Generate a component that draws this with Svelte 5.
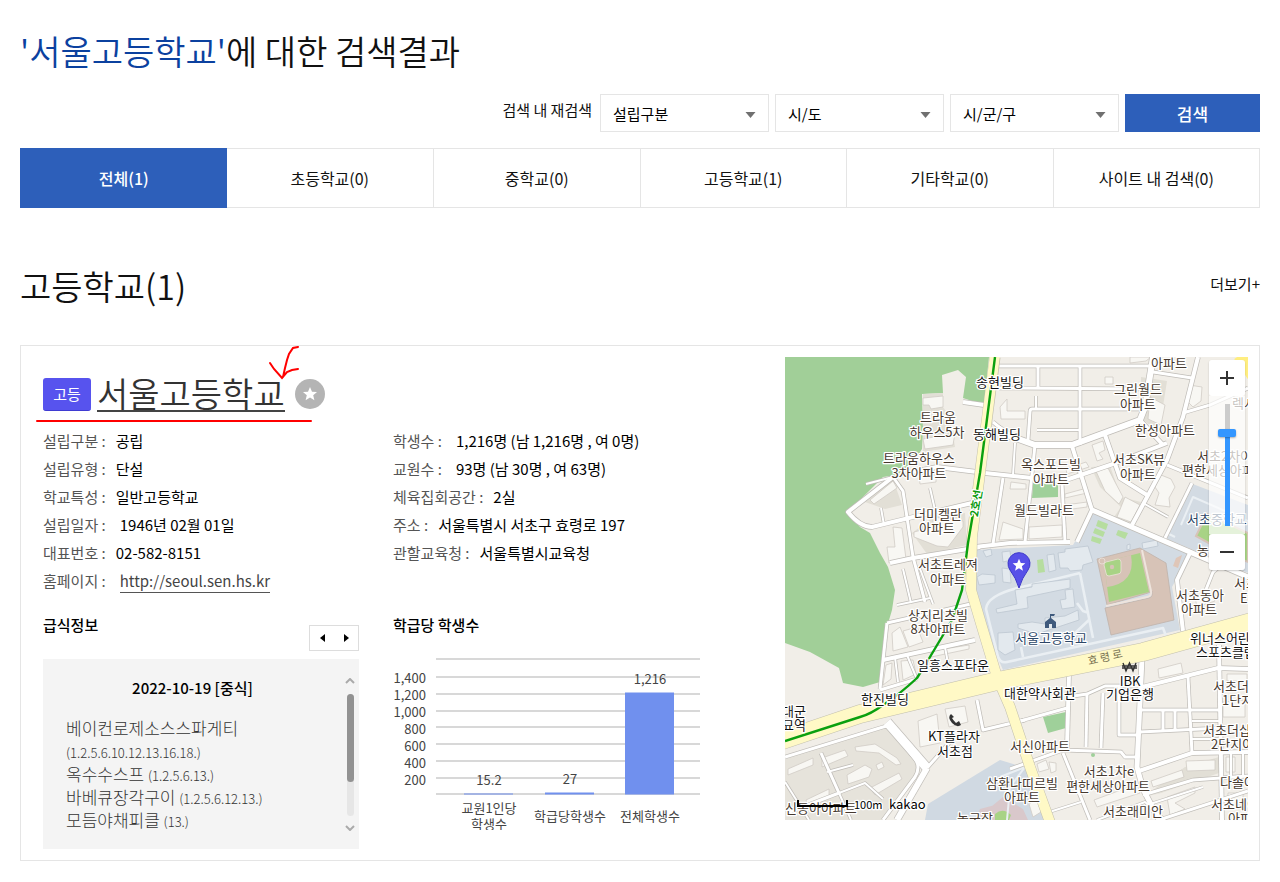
<script>
  const filters = ['설립구분', '시/도', '시/군/구'];
  const tabs = ['전체(1)', '초등학교(0)', '중학교(0)', '고등학교(1)', '기타학교(0)', '사이트 내 검색(0)'];

  const basics = [
    { label: '설립구분', value: '공립' },
    { label: '설립유형', value: '단설' },
    { label: '학교특성', value: '일반고등학교' },
    { label: '설립일자', value: '1946년 02월 01일', wide: true },
    { label: '대표번호', value: '02-582-8151' },
    { label: '홈페이지', value: 'http://seoul.sen.hs.kr', link: true, wide: true }
  ];
  const details = [
    { label: '학생수', value: '1,216명 (남 1,216명 , 여 0명)', wide: true },
    { label: '교원수', value: '93명 (남 30명 , 여 63명)', wide: true },
    { label: '체육집회공간', value: '2실' },
    { label: '주소', value: '서울특별시 서초구 효령로 197' },
    { label: '관할교육청', value: '서울특별시교육청' }
  ];

  const meals = [
    { name: '베이컨로제소스스파게티', codes: '(1.2.5.6.10.12.13.16.18.)' },
    { name: '옥수수스프', codes: '(1.2.5.6.13.)' },
    { name: '바베큐장각구이', codes: '(1.2.5.6.12.13.)' },
    { name: '모듬야채피클', codes: '(13.)' }
  ];

  const ticks = ['1,400', '1,200', '1,000', '800', '600', '400', '200'];
  const bars = [
    { value: '15.2', x: 71, h: 1, labelY: 135, name: ['교원1인당', '학생수'] },
    { value: '27', x: 152, h: 2, labelY: 134, name: ['학급당학생수'] },
    { value: '1,216', x: 232, h: 102, labelY: 34, name: ['전체학생수'] }
  ];

  // Minor streets: stroke width and path
  const streets = [
    [3, 'M213 9H366'], [3, 'M295 9V88'], [3, 'M253 9V31'], [3, 'M214 31L360 32'],
    [3, 'M355 52H247Q245 52 245 55L243 83'], [2, 'M252 73H294'], [2, 'M251 39V51'],
    [4, 'M378 88L355 63'], [4, 'M413 0L398 60L382 103L347 168'], [3, 'M368 15L407 21'],
    [3, 'M398 56L425 48L463 31'], [4, 'M287 89L297 121L307 153L292 185'],
    [5, 'M307 153L463 220'], [4, 'M128 115L152 110L200 116L247 121L278 124L328 107L382 86'],
    [4, 'M320 78L335 121L362 138'], [3, 'M250 88L240 185'], [3, 'M277 126L280 185'],
    [4, 'M190 190L225 186L285 185'], [3, 'M382 108L463 141'], [2, 'M358 146L383 160'],
    [3, 'M407 126L380 181'], [2, 'M230 86L228 118'], [4, 'M108 120L63 155Q75 170 87 170L128 160L187 146'],
    [3, 'M108 120L118 134L128 200L140 245'], [2, 'M145 131L150 153'], [2, 'M96 151L99 168'],
    [4, 'M105 206L128 201L195 190'], [2, 'M81 127L108 120'], [4, 'M178 45L199 48'],
    [2, 'M118 212L126 246'], [2, 'M134 209L148 247'], [3, 'M208 65L225 79'],
    [3, 'M218 121L208 187'], [2, 'M112 248L145 241'], [3, 'M102 266L142 257L190 246'],
    [3, 'M102 266L95 332'], [4, 'M98 303L190 283'], [3, 'M95 333L132 322'],
    [2, 'M122 298L131 320'], [2, 'M110 300L113 325'], [2, 'M160 290L164 312'],
    [9, 'M102 365L142 411'], [3, 'M142 411L164 386'], [6, 'M142 411L112 463'],
    [3, 'M192 343L198 373L240 363'], [3, 'M0 400L98 370Q104 368 107 372L130 402Q136 410 130 420L98 463'],
    [3, 'M36 396L54 436L2 456'], [2, 'M54 436L66 463'], [2, 'M42 415L68 408'],
    [2, 'M54 436L80 426L98 442'], [2, 'M0 425L24 463'], [3, 'M232 365L282 351'],
    [4, 'M284 316L282 391'], [3, 'M225 412L278 393L336 395L340 400H352'],
    [3, 'M302 336L301 390'], [3, 'M318 336L316 391'], [3, 'M282 340L302 337L320 329H354'],
    [3, 'M334 330V378H353'], [5, 'M357 301L352 410L358 432L374 463'],
    [4, 'M357 330L433 311L463 312'], [3, 'M403 320L407 396'], [3, 'M355 353H437'],
    [3, 'M355 375L436 371'], [4, 'M354 414L407 396L463 395'], [3, 'M358 438L408 423L463 419'],
    [4, 'M434 288L437 463'], [3, 'M278 396L305 463'], [2, 'M258 457L296 445'],
    [4, 'M405 196L392 223L398 274'], [3, 'M418 240L428 215L436 208'],
    [3, 'M378 353V374'], [3, 'M390 353V374'], [2, 'M407 364H435'], [2, 'M407 382H435'],
    [2, 'M446 396V419'], [2, 'M458 396V419'], [2, 'M312 463L360 445L380 463'],
    [2, 'M362 448L418 430'], [3, 'M374 463L463 434']
  ];

  // Building footprints
  const buildings = [
    'M138 41L158 39V50L146 52L144 48H138Z', 'M138 82L170 76L168 88L140 92Z', 'M85 143L108 124L112 131L89 147Z',
    'M129 175L148 170V160L178 164V170L163 190L152 189L129 180Z', 'M108 170L117 171L121 202L104 206L102 190H110Z',
    'M134 118H151V125L135 127Z', 'M215 50L222 42V54H240V62H216Z', 'M218 165L238 172V182L214 183Z',
    'M365 40L380 48L376 68L363 62Z', 'M404 28L417 30L416 44L408 50L403 45Z', 'M307 88L318 84L320 93L314 96L318 102L312 104Z',
    'M281 112L301 105L304 110L282 117Z', 'M280 137L302 131V136L280 141Z', 'M280 148L302 145V150L280 153Z',
    'M310 112L323 111L330 125L338 140L334 147L320 134Z', 'M340 140L355 148L346 165L332 160Z',
    'M376 118L386 122L390 130L384 141L385 150L370 148L374 136L370 130Z', 'M244 170L277 168V180L244 182Z',
    'M226 125L241 127V132L225 132Z', 'M320 20H328V27H320Z',
    'M107 276L115 270L123 290L108 294Z', 'M118 274L132 270L138 285L124 290Z', 'M146 294L184 288V292L146 300Z',
    'M101 308L107 306L106 322L98 328Z', 'M116 304L128 303L131 317L118 323Z', 'M133 364L152 357L155 386L135 390Z',
    'M160 352L180 349L183 365L164 370Z', 'M373 312L396 306L398 316L374 321Z', 'M3 412L28 401V408L3 418Z',
    'M37 401L60 393L63 399L37 410Z', 'M70 390L90 387L112 401L116 407L111 408L94 396L71 394Z',
    'M62 418L80 408L87 412L84 420L63 427Z', 'M85 431L114 416L117 422L90 438Z', 'M21 443L44 432V439L22 447Z',
    'M91 408L97 405L99 410L93 413Z', 'M252 407L261 403L264 412L254 415Z', 'M264 405L271 406V414L266 416Z',
    'M309 443L352 427L355 436L312 450Z', 'M366 424L397 413L399 420L368 430Z', 'M401 404L430 403V413L402 414Z',
    'M244 447L252 442L256 455L248 460Z', 'M382 440L410 430V436L390 446L400 452L385 458Z',
    'M438 345L460 343V360H438Z', 'M442 317H462V324H442Z', 'M441 400H450V415H441Z', 'M443 436H458V448H443Z',
    'M361 4L366 0H345V6Z', 'M410 240L425 236L430 244L412 250Z'
  ];

  const campus = [
    'M198 194L206 192L207 198L201 200Z', 'M217 195L225 194L226 203L218 205Z', 'M192 220L197 217L210 218V226L194 228Z',
    'M217 211L225 212L226 226L218 225Z', 'M262 198L269 197L271 213L264 215Z',
    'M273 196L280 195V192L303 189L308 205L298 208L297 213L285 214L283 211H275Z',
    'M230 233L247 230V227L285 222V231L242 240L243 251L212 256L211 252L232 247Z',
    'M280 233L288 232L290 250L277 252L275 243L281 242Z',
    'M233 267L247 265L260 267V261L280 259L293 253L294 263L255 276L245 275L233 271Z',
    'M213 276L228 275L230 293L220 298L213 293Z', 'M357 186L372 183L373 189L358 192Z', 'M342 188L345 187V192L342 193Z'
  ];

  // Map captions: text, x, y of the middle of the line, colour kind, anchor
  const captions = [
    ['아파트', 384, 6], ['그린월드', 353, 32], ['아파트', 353, 47], ['트라움', 153, 60], ['하우스5차', 152, 75],
    ['한성아파트', 380, 73], ['트라움하우스', 134, 101], ['3차아파트', 134, 116], ['옥스포드빌', 266, 107],
    ['아파트', 266, 122], ['서초SK뷰', 354, 102], ['아파트', 353, 117], ['서초2차이', 412, 99, '', 'start'],
    ['편한세상아파', 397, 113, '', 'start'], ['렉시', 447, 46, '', 'start'], ['더미켈란', 153, 157], ['아파트', 152, 171],
    ['월드빌라트', 259, 153], ['서초중학교', 402, 162, 'navy', 'start'], ['농', 418, 193, '', 'middle'],
    ['서초트레져', 163, 207], ['아파트', 163, 222], ['상지리츠빌', 153, 258], ['8차아파트', 153, 272],
    ['서초동아', 415, 238], ['아파트', 414, 252], ['서초', 449, 226, '', 'start'], ['E', 455, 241, '', 'start'],
    ['서신아파트', 255, 389], ['서초1차e', 324, 414], ['편한세상아파트', 323, 429], ['서초래미안', 348, 454],
    ['삼환나띠르빌', 237, 426], ['아파트', 237, 440], ['서초더샵', 428, 329, '', 'start'], ['1단지', 437, 343, '', 'start'],
    ['서초더샵', 418, 373, '', 'start'], ['2단지아파트', 426, 387, '', 'start'], ['다솔아파트', 435, 425, '', 'start'],
    ['서초네이처', 426, 447, '', 'start'], ['아파트', 443, 461, '', 'start'], ['신동아아파트', 0, 451, '', 'start'],
    ['농구장', 190, 461], ['송현빌딩', 215, 25, 'dark'], ['동해빌딩', 212, 77, 'dark'],
    ['일흥스포타운', 168, 308, 'dark'], ['한진빌딩', 100, 342, 'dark'], ['대한약사회관', 255, 336, 'dark'],
    ['IBK', 345, 324, 'dark'], ['기업은행', 345, 337, 'dark'], ['KT플라자', 169, 379, 'dark'], ['서초점', 170, 394, 'dark'],
    ['위너스어린이', 405, 281, 'dark', 'start'], ['스포츠클럽', 411, 295, 'dark', 'start'],
    ['대군', -3, 354, 'dark', 'start'], ['묘역', -3, 368, 'dark', 'start'], ['서울고등학교', 266, 281, 'navy']
  ];

  const star = 'M0 -7L2 -2.3L7 -2L3.2 1.3L4.4 6.3L0 3.6L-4.4 6.3L-3.2 1.3L-7 -2L-2 -2.3Z';
  let zoom = $state(78);
</script>

{#snippet facts(items)}
  <dl class="facts">
    {#each items as item}
      <div>
        <dt>{item.label} :</dt>
        <dd class:wide={item.wide}>
          {#if item.link}<a href={item.value}>{item.value}</a>{:else}{item.value}{/if}
        </dd>
      </div>
    {/each}
  </dl>
{/snippet}

<main class="page">
  <h1><strong>'서울고등학교'</strong>에 대한 검색결과</h1>

  <form class="refine" onsubmit={(e) => e.preventDefault()}>
    <label for="filter-0">검색 내 재검색</label>
    {#each filters as name, i}
      <div class="select">
        <select id="filter-{i}" aria-label={name}><option>{name}</option></select>
        <svg viewBox="0 0 10 6" aria-hidden="true"><path d="M0 0H10L5 6Z" fill="#707070" /></svg>
      </div>
    {/each}
    <button type="submit">검색</button>
  </form>

  <nav class="tabs">
    {#each tabs as tab, i}<a href="#tab-{i}" class:active={i === 0}>{tab}</a>{/each}
  </nav>

  <header class="section-head">
    <h2>고등학교(1)</h2>
    <a href="#more">더보기+</a>
  </header>

  <article class="card">
    <div class="school">
      <div class="title">
        <span class="badge">고등</span>
        <h3><a href="#school">서울고등학교</a></h3>
        <button type="button" class="favorite" aria-label="즐겨찾기">
          <svg viewBox="-15 -15 30 30"><path d={star} fill="#fff" /></svg>
        </button>
      </div>

      <div class="columns">
        {@render facts(basics)}
        {@render facts(details)}

        <section class="meal">
          <header>
            <h4>급식정보</h4>
            <div class="pager">
              <button type="button" aria-label="이전"><svg viewBox="0 0 5 8"><path d="M5 0V8L0 4Z" /></svg></button>
              <button type="button" aria-label="다음"><svg viewBox="0 0 5 8"><path d="M0 0V8L5 4Z" /></svg></button>
            </div>
          </header>
          <div class="menu">
            <div class="menu-text">
              <h5>2022-10-19 [중식]</h5>
              <ul>
                {#each meals as meal}<li>{meal.name} <span>{meal.codes}</span></li>{/each}
              </ul>
            </div>
            <div class="scroll" aria-hidden="true">
              <svg viewBox="0 0 10 6"><path d="M1 5L5 1L9 5" /></svg>
              <div class="rail"><div></div></div>
              <svg viewBox="0 0 10 6"><path d="M1 1L5 5L9 1" /></svg>
            </div>
          </div>
        </section>

        <section class="stats">
          <h4>학급당 학생수</h4>
          <svg class="chart" viewBox="0 0 320 180">
            <path d="M43 9H307M43 27H307M43 44H307M43 61H307M43 77H307M43 94H307M43 111H307M43 128H307M43 144H307" stroke="#ccc" stroke-width="1.4" />
            {#each ticks as tick, i}<text x="33" y={33 + i * 17} text-anchor="end">{tick}</text>{/each}
            {#each bars as bar}
              <rect x={bar.x} y={144.5 - bar.h} width="49" height={bar.h} fill="#7090ee" />
              <text x={bar.x + 25} y={bar.labelY} text-anchor="middle">{bar.value}</text>
              {#each bar.name as line, n}
                <text x={bar.x + 25} y={(bar.name.length > 1 ? 163 : 171) + n * 16} text-anchor="middle">{line}</text>
              {/each}
            {/each}
          </svg>
        </section>
      </div>
    </div>

    <div class="map">
      <svg class="canvas" viewBox="0 0 463 463">
        <rect width="463" height="463" fill="#f1eee8" />
        <path d="M0 0H204L199 48L178 41L181 20L173 13L157 18L158 36L137 37L138 73L137 92L130 103L112 118L98 120L63 155L75 170L85 176L95 196L103 210L110 233L107 253L102 270L95 325L78 330L58 326L54 311L25 295L0 286Z" fill="#a1cf98" />
        <path d="M0 402L100 368L135 410L97 463H0Z" fill="#e6e3db" />
        <path d="M80 145L108 122L117 148L100 152ZM127 176L150 159L180 156L182 188L142 197ZM138 37L158 36V50L165 60L170 90L138 95ZM356 20L382 24L374 75L357 62ZM306 110L325 109L336 140L356 145L346 167L329 160L336 150L315 130ZM358 440L400 410L434 400V416L376 436Z" fill="#e2dfd6" />
        <path d="M190 193L288 188L307 155L405 197L387 230L395 273L218 313L208 290L188 243Z" fill="#d3dbe3" />
        <path d="M405 126L463 148V216L382 182Z" fill="#d3dbe3" />
        <path d="M143 447L215 403L245 412L262 463H140Z" fill="#d0d9e2" />
        <path d="M411 179L422 157L463 176V205L440 195Z" fill="#a8d385" stroke="#d7c3b7" stroke-width="2" />
        <path d="M248 126L273 128V140L247 141ZM258 360L281 355V371L263 376Z" fill="#9fd09a" />
        <path d="M313 163L323 167L321 173L311 169ZM310 171L320 175L318 180L308 176ZM307 179L317 182L315 187L306 184ZM333 173L343 176L340 182L331 178ZM252 203L258 202L260 215L253 216Z" fill="#b6dd9f" />
        <path d="M312 202L355 191L381 206L389 263L326 278L320 251L364 241Q368 240 367 234L363 236L322 248Z" fill="#d7c3b7" stroke="#bfb3ab" stroke-width="0.8" stroke-linejoin="round" />
        <path d="M321 249L362 240Q367 239 366 234L357 193" fill="none" stroke="#eee4dd" stroke-width="2" />
        <path d="M319 205L355 196L364 235L324 245Z" fill="#a8d385" />
        <path d="M319 205L346 198Q351 226 322 230Z" fill="#d7c3b7" />
        <path d="M321 205L333 202Q336 202 336 205V214Q336 217 333 217L324 219Q321 219 321 216L319 208Q319 206 321 205Z" fill="#a8d385" stroke="#ece2da" stroke-width="0.8" />
        <circle cx="327" cy="210" r="2.200" fill="#d7c3b7" />
        <circle cx="317" cy="204" r="3" fill="#d7c3b7" stroke="#ece2da" stroke-width="0.8" />
        <path d="M391 201L397 198L393 211L388 209Z" fill="#dfc6b8" />
        <path d="M190 463L218 440L238 452L243 463ZM195 452L210 448V463H190Z" fill="#d9c8cb" />
        <path d="M210 457Q218 450 226 458L224 463H210Z" fill="#a8d385" />
        <circle cx="308" cy="398" r="2" fill="#9fd09a" />

        <g fill="none" stroke="#eaeff3" stroke-width="2.6" stroke-linejoin="round">
          <path d="M295 216L237 230Q202 238 201 252L212 296Q214 307 222 305L378 271L381 279M295 216L308 281M292 246L298 254L304 256M288 278L305 262M236 290L238 300" />
          <path d="M396 168L408 140L463 164M382 176L390 180" stroke-width="2" />
          <path d="M215 420L240 410L225 430L222 463" stroke-width="2" />
        </g>
        <g fill="#f8f7f3" stroke="#d0ccc5" stroke-width="0.8">
          {#each buildings as d}<path {d} />{/each}
        </g>
        <g fill="#e3e9ee" stroke="#bcc6d0" stroke-width="0.8">
          {#each campus as d}<path {d} />{/each}
        </g>

        <g fill="none" stroke-linejoin="round">
          <g stroke="#bfbcb7">
            {#each streets as [w, d]}<path {d} stroke-width={w + 1.4} />{/each}
            <path d="M213 71L225 79L250 88H287L355 63L360 50L368 0" stroke-width="7.4" />
          </g>
          <g stroke="#fff">
            {#each streets as [w, d]}<path {d} stroke-width={w} />{/each}
            <path d="M213 71L225 79L250 88H287L355 63L360 50L368 0" stroke-width="6" />
          </g>
          <g stroke="#c2bfae">
            <path d="M210 0L195 116L187 180L186 233L197 270L212 320L225 350L245 410L266 468" stroke-width="11" />
            <path d="M-5 384L75 357L208 325L358 295L470 264" stroke-width="19" />
          </g>
          <g stroke="#fff9c6">
            <path d="M210 -2L195 116L187 180L186 233L197 270L212 320L225 350L245 410L266 468" stroke-width="10" />
            <path d="M-5 384L75 357L208 325L358 295L470 264" stroke-width="18" />
            <path d="M455 -2L470 20" stroke-width="14" stroke="#ffee80" />
          </g>
          <path d="M210 0L195 116L183 186L177 233L167 263L142 305L132 321Q115 337 98 348Q86 357 75 360L0 384" stroke="#0aa00f" stroke-width="2.4" />
        </g>

        <g class="captions">
          {#each captions as [text, x, y, kind, anchor]}
            <text {x} y={y + 5} class={kind} text-anchor={anchor || 'middle'}>{text}</text>
          {/each}
          <text class="road" transform="translate(321 304) rotate(-13)" text-anchor="middle">효 령 로</text>
          <text class="line" transform="translate(195 147) rotate(-80)" text-anchor="middle">2호선</text>
          <text class="scale" x="69" y="452">100m</text>
          <text class="kakao" x="104" y="452">kakao</text>
        </g>
        <path d="M13 443V449H62V443" fill="none" stroke="#000" stroke-width="2" />

        <g stroke="#333" fill="none" stroke-width="1.4">
          <path d="M338 306L341 314L344.500 306L348 314L351 306M337 309H352M337 311H352" />
        </g>
        <path d="M166 357Q162 360 167 366Q172 371 176 368L174 364L171 366Q168 363 167 361L169 360Z" fill="#333" />
        <path d="M260 271V265L265 261V257H270L269 259H266V261L271 265V271H267V267H264V271Z" fill="#3f5a7d" />

        <path d="M234 231Q231 221 225 213A11 11 0 1 1 243 213Q237 221 234 231Z" fill="#5750e8" stroke="#3a35c9" />
        <path d={star} transform="translate(234 208) scale(0.9)" fill="#fff" />
      </svg>

      <div class="zoom">
        <button type="button" aria-label="확대"><svg viewBox="0 0 14 14"><path d="M7 0V14M0 7H14" /></svg></button>
        <div class="level"><input type="range" min="0" max="100" bind:value={zoom} aria-label="지도 확대 수준" /></div>
        <button type="button" aria-label="축소"><svg viewBox="0 0 14 14"><path d="M0 7H14" /></svg></button>
      </div>
    </div>

    <svg class="marks" viewBox="0 0 300 80" aria-hidden="true">
      <path d="M16 75H290" />
      <path d="M277 1L272 2L268 8L266 14L264 22L262 31M249 17L253 23L261 32L266 26L271 24L277 23" />
    </svg>
  </article>
</main>

<style>
  :global(body) {
    background: #fff;
  }
  .page {
    padding: 27px 20px 20px;
    font-family: 'Noto Sans CJK KR', 'Noto Sans', sans-serif;
    font-size: 15px;
    color: #111;
  }
  .page :global(*) {
    box-sizing: border-box;
  }
  h1, h2, h3, h4, h5, dl, dd, ul {
    margin: 0;
    padding: 0;
  }
  a {
    color: inherit;
    text-decoration: none;
  }
  button, select, input {
    margin: 0;
    padding: 0;
    border: 0;
    font: inherit;
    color: inherit;
    background: none;
  }
  h1, h2 {
    font-size: 34px;
    font-weight: 350;
    line-height: 48px;
  }
  h1 strong {
    font-weight: 350;
    color: #0b419f;
  }
  .refine {
    display: flex;
    justify-content: flex-end;
    gap: 6px;
    margin-top: 19px;
  }
  .refine label {
    margin-right: 2px;
    line-height: 32px;
  }
  .select {
    position: relative;
    flex: 0 1 169px;
  }
  .select select {
    width: 100%;
    height: 38px;
    padding: 0 12px;
    border: 1px solid #e5e5e5;
    appearance: none;
    color: #000;
  }
  .select svg {
    position: absolute;
    right: 13px;
    top: 18px;
    width: 11px;
    height: 6px;
    pointer-events: none;
  }
  .refine button {
    flex: 0 1 135px;
    height: 38px;
    font-size: 17px;
    font-weight: 500;
    color: #fff;
    background: #2d5fba;
  }
  .tabs {
    display: grid;
    grid-template-columns: repeat(6, 1fr);
    margin-top: 16px;
    border: 1px solid #e5e5e5;
    border-left: 0;
  }
  .tabs a {
    border-left: 1px solid #e5e5e5;
    font-size: 16px;
    line-height: 58px;
    text-align: center;
  }
  .tabs .active {
    margin: -1px 0;
    border-color: #2d5fba;
    line-height: 60px;
    color: #fff;
    background: #2d5fba;
    font-weight: 500;
  }
  .tabs .active + a {
    border-left: 0;
  }
  .section-head {
    display: flex;
    justify-content: space-between;
    align-items: center;
    margin-top: 54px;
  }
  .section-head a {
    line-height: 40px;
    padding-bottom: 4px;
  }
  .card {
    position: relative;
    display: grid;
    grid-template-columns: 742fr 463fr;
    align-items: start;
    margin-top: 35px;
    padding: 11px 11px 11px 22px;
    border: 1px solid #e5e5e5;
  }
  .title {
    display: flex;
    align-items: center;
    height: 70px;
    padding-top: 4px;
  }
  .badge {
    width: 48px;
    border-radius: 3px;
    line-height: 32px;
    text-align: center;
    color: #fff;
    background: #5753ee;
    border-bottom: 1px solid #3f3bd2;
  }
  h3 {
    margin: 0 10px 0 6px;
    border-bottom: 2px solid #444;
    font-size: 34px;
    font-weight: 350;
    line-height: 34px;
    color: #333;
  }
  .favorite {
    width: 30px;
    height: 30px;
    border-radius: 50%;
    background: #b4b4b4;
  }
  .favorite svg {
    display: block;
  }
  .columns {
    display: grid;
    grid-template-columns: 316fr 392fr;
    column-gap: 34px;
  }
  .facts div {
    display: flex;
    line-height: 28px;
  }
  .facts dt {
    color: #555;
  }
  .facts dd {
    margin-left: 10px;
    color: #000;
  }
  .facts .wide {
    margin-left: 14px;
  }
  .facts a {
    display: block;
    line-height: 23px;
    margin-top: 2px;
    border-bottom: 1px solid #555;
    color: #444;
  }
  h4 {
    font-size: 15px;
    font-weight: 500;
    line-height: 28px;
    color: #000;
  }
  .meal, .stats {
    padding-top: 16px;
  }
  .meal header {
    display: flex;
    justify-content: space-between;
    align-items: flex-start;
  }
  .pager {
    display: flex;
    justify-content: space-between;
    width: 50px;
    height: 26px;
    margin-top: 14px;
    border: 1px solid #ddd;
  }
  .pager button {
    display: grid;
    place-items: center;
    width: 24px;
  }
  .pager svg {
    width: 5px;
    height: 8px;
  }
  .menu {
    display: flex;
    margin-top: 8px;
    padding: 15px 4px 15px 23px;
    background: #f4f4f4;
  }
  .menu-text {
    flex: 1;
  }
  h5 {
    margin-bottom: 14px;
    font-size: 15px;
    font-weight: 500;
    line-height: 28px;
    text-align: center;
    color: #000;
    padding-right: 26px;
  }
  ul {
    list-style: none;
    max-width: 200px;
    padding-bottom: 3px;
    font-size: 17px;
    font-weight: 300;
    line-height: 23px;
    color: #333;
  }
  li span {
    line-height: 16px;
    font-size: 13px;
  }
  .scroll {
    display: flex;
    flex-direction: column;
    align-items: center;
    justify-content: space-between;
    width: 10px;
    padding: 4px 0 3px;
  }
  .scroll svg {
    width: 10px;
    height: 6px;
    fill: none;
    stroke: #aaa;
    stroke-width: 2;
  }
  .rail {
    width: 7px;
    height: 122px;
    border-radius: 4px;
    background: #e6e6e6;
  }
  .rail div {
    height: 88px;
    border-radius: 4px;
    background: #929292;
  }
  .chart {
    display: block;
    width: 320px;
    max-width: 100%;
    margin-top: 11px;
    font-size: 13px;
    fill: #444;
  }
  .map {
    position: relative;
  }
  .canvas {
    display: block;
    width: 100%;
  }
  .captions {
    font-size: 13px;
    fill: #46392f;
    stroke: #fff;
    stroke-width: 2.5px;
    stroke-linejoin: round;
    paint-order: stroke;
  }
  .captions .dark {
    fill: #111;
  }
  .captions .navy {
    fill: #2c4667;
  }
  .captions .road {
    font-size: 11px;
    fill: #75704f;
    stroke-width: 0;
  }
  .captions .line {
    font-size: 11px;
    font-weight: 700;
    fill: #0a9a0f;
  }
  .captions .scale {
    font-size: 11px;
    fill: #000;
  }
  .captions .kakao {
    font-size: 13px;
    fill: #000;
  }
  .zoom {
    position: absolute;
    top: 3px;
    right: 3px;
    width: 36px;
    border-radius: 3px;
    box-shadow: 0 1px 2px rgba(0, 0, 0, 0.2);
  }
  .zoom button {
    display: grid;
    place-items: center;
    width: 36px;
    height: 36px;
    border-radius: 3px;
    background: #fff;
  }
  .zoom button svg {
    width: 14px;
    height: 14px;
    stroke: #333;
    stroke-width: 2;
  }
  .level {
    display: grid;
    place-items: center;
    height: 138px;
    background: rgba(255, 255, 255, 0.7);
  }
  .level input {
    width: 18px;
    height: 122px;
    writing-mode: vertical-lr;
    direction: rtl;
    appearance: none;
    background: linear-gradient(#ccc 24%, #3396ff 24%) center / 5px 100% no-repeat;
  }
  .level input::-webkit-slider-thumb {
    appearance: none;
    width: 18px;
    height: 8px;
    border-radius: 2px;
    background: #3396ff;
    box-shadow: 0 1px 2px rgba(0, 0, 0, 0.3);
  }
  .marks {
    position: absolute;
    left: 0;
    top: 0;
    width: 300px;
    height: 80px;
    fill: none;
    stroke: #f00;
    stroke-width: 2;
    stroke-linecap: round;
    pointer-events: none;
  }
</style>
